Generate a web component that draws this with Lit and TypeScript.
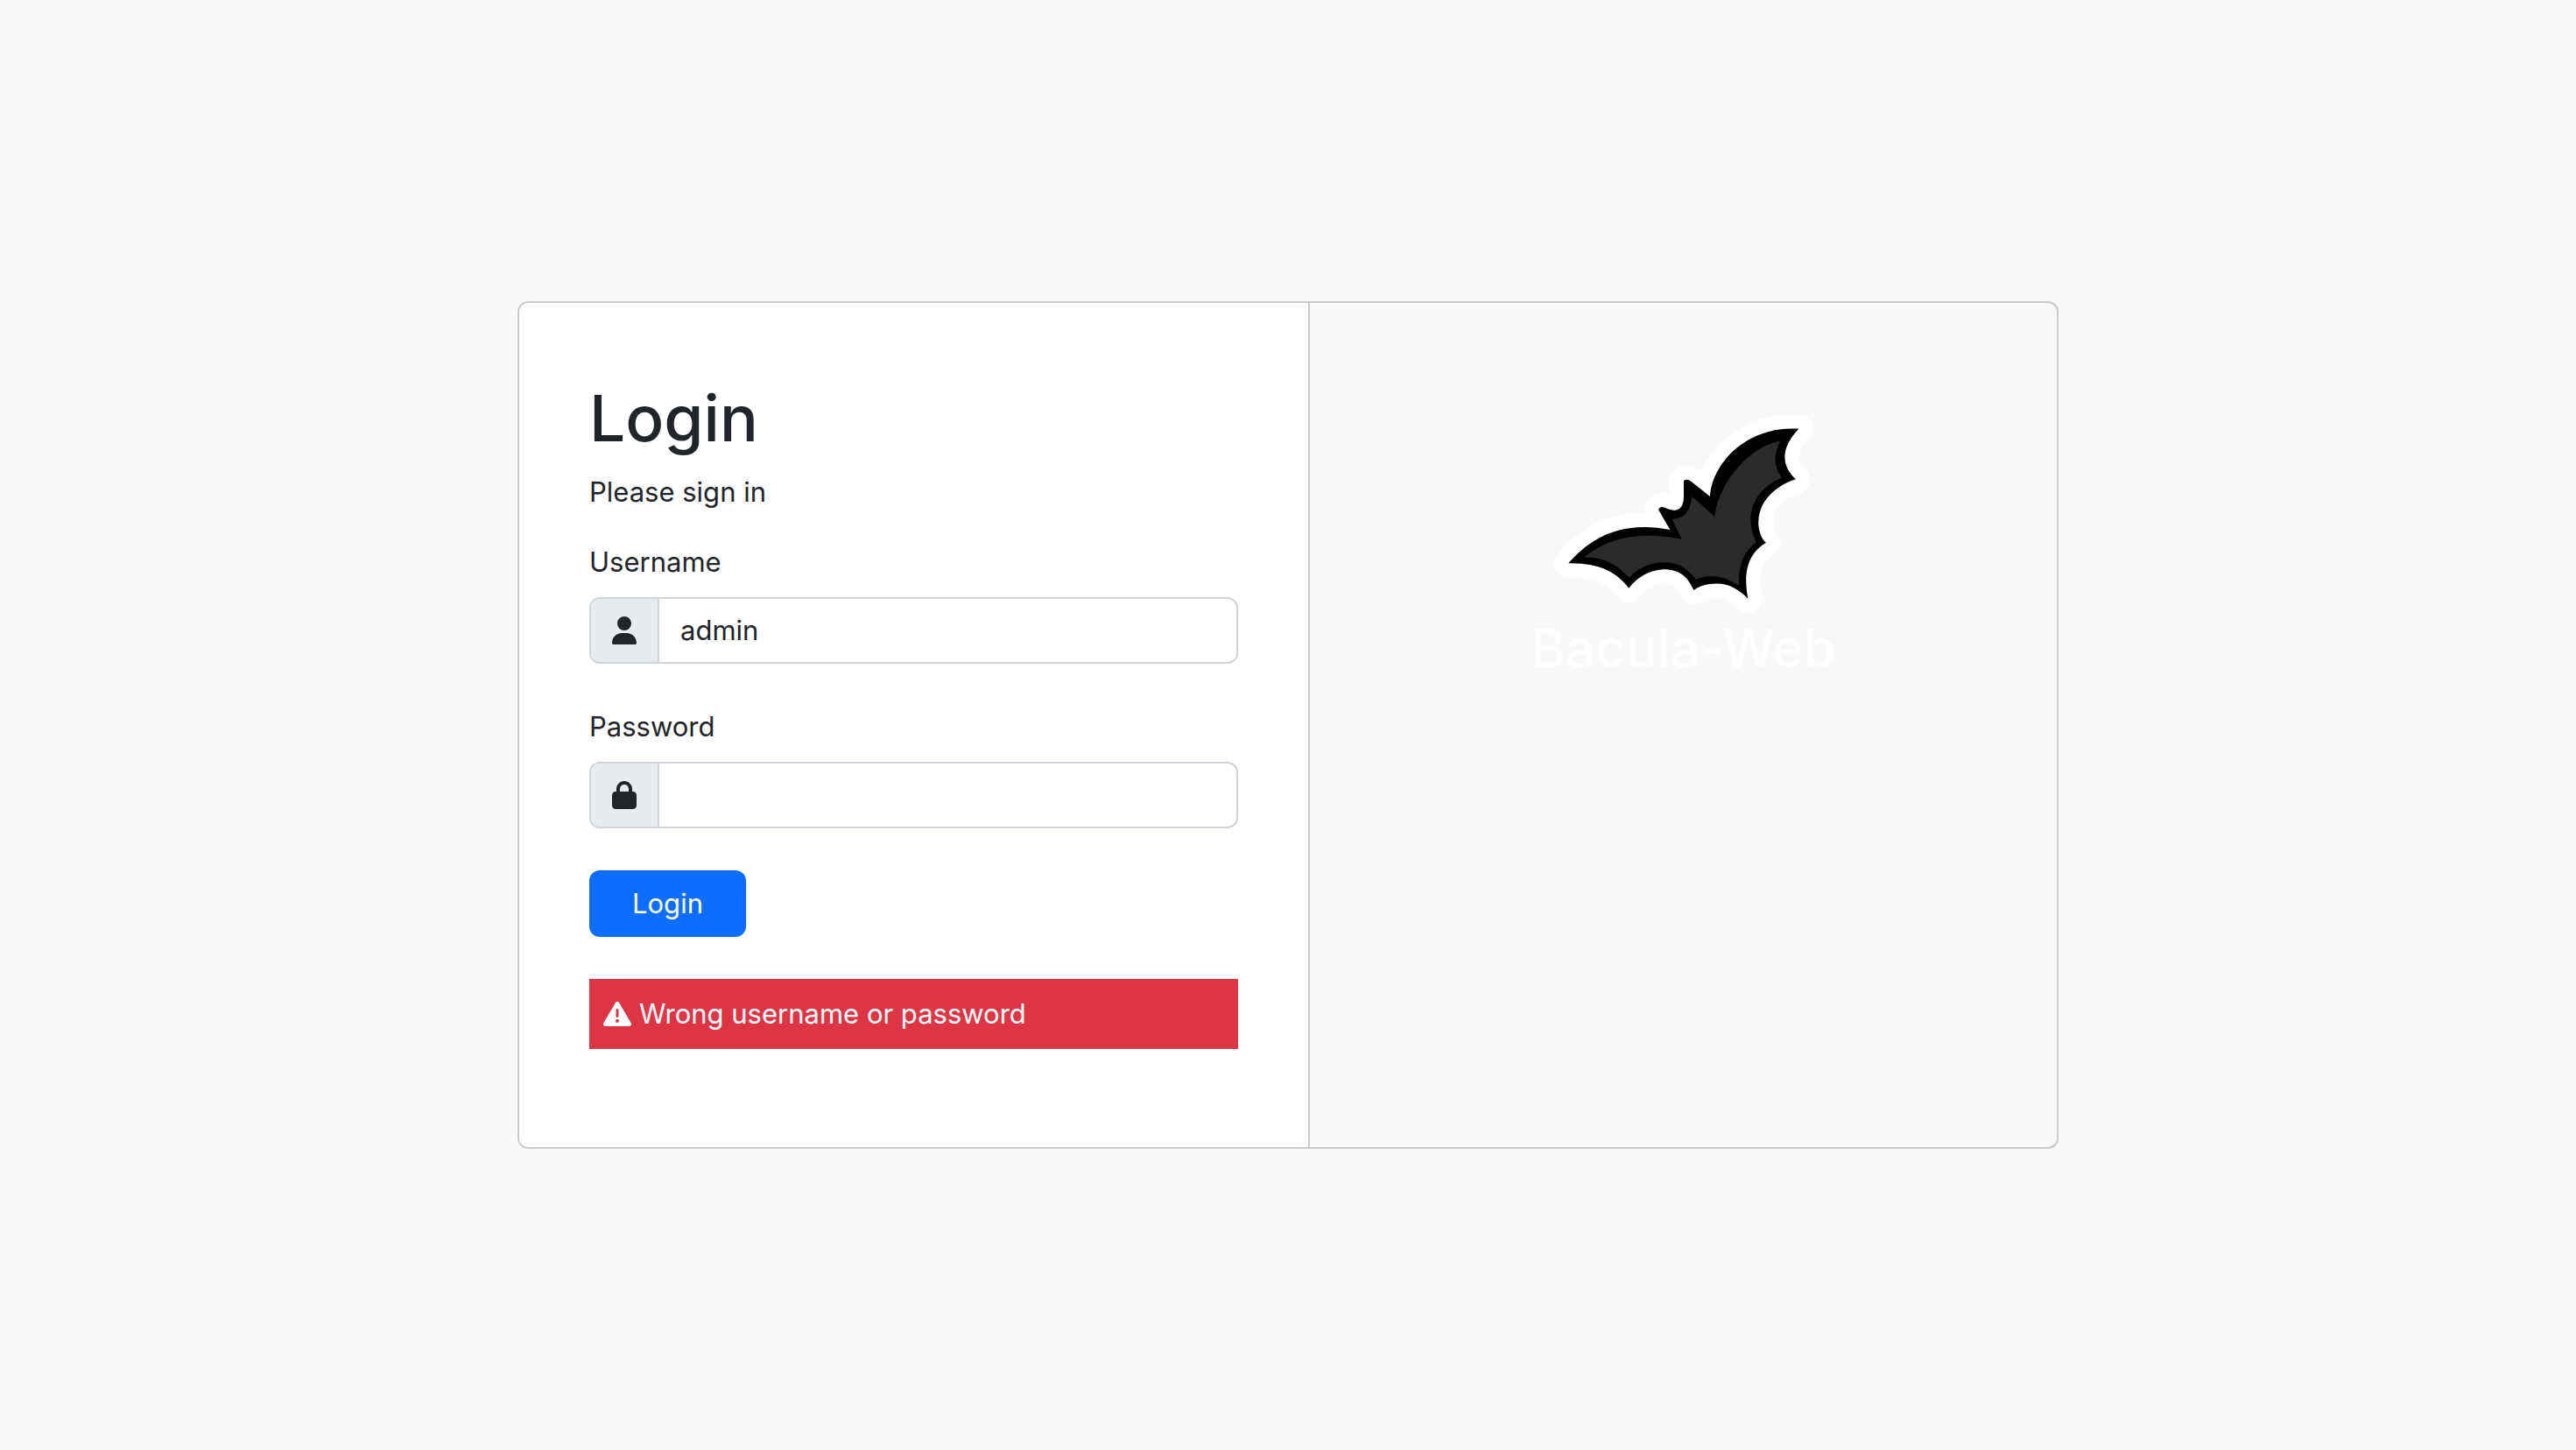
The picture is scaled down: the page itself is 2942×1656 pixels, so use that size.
import { LitElement, html, css, svg } from "lit";
import { customElement } from "lit/decorators.js";

const BAT_OUTLINE =
  "M155 551C220 475 325 400 503 436L463 367Q470 352 487 361C522 377 549 372 550 322L550 268Q560 260 575 270L640 322C645 215 760 78 944 90C882 155 882 215 934 263C850 290 802 350 806 420C809 448 818 468 832 480C780 512 750 565 770 672C735 638 700 614 640 622C615 625 600 632 584 643C560 590 530 572 480 572C430 575 390 600 362 636C320 585 270 550 155 551Z";
const BAT_BODY =
  "M207 531C270 480 370 433 543 468L510 399C548 398 574 378 577 321L656 391C665 290 765 152 880 132C855 185 860 225 886 258C800 292 750 380 798 478C752 515 735 565 740 628C690 595 640 585 592 607C555 555 510 545 475 548C430 550 390 570 363 600C320 555 270 525 207 531Z";

const userIcon = html`<svg class="icon" viewBox="0 0 448 512" aria-hidden="true">${svg`<path d="M224 256A128 128 0 1 0 224 0a128 128 0 1 0 0 256zm-45.7 48C79.8 304 0 383.8 0 482.3C0 498.7 13.3 512 29.7 512l388.6 0c16.4 0 29.7-13.3 29.7-29.7C448 383.8 368.2 304 269.7 304l-91.4 0z"/>`}</svg>`;

const lockIcon = html`<svg class="icon" viewBox="0 0 448 512" aria-hidden="true">${svg`<path d="M144 144l0 48 160 0 0-48c0-44.2-35.8-80-80-80s-80 35.8-80 80zM80 192l0-48C80 64.5 144.5 0 224 0s144 64.5 144 144l0 48 16 0c35.3 0 64 28.7 64 64l0 192c0 35.3-28.7 64-64 64L64 512c-35.3 0-64-28.7-64-64L0 256c0-35.3 28.7-64 64-64l16 0z"/>`}</svg>`;

const warningIcon = html`<svg class="icon icon-wide" viewBox="0 0 512 512" aria-hidden="true">${svg`<path d="M256 32c14.2 0 27.3 7.5 34.5 19.8l216 368c7.3 12.4 7.3 27.7 .2 40.1S486.3 480 472 480L40 480c-14.3 0-27.6-7.7-34.7-20.1s-7-27.8 .2-40.1l216-368C228.7 39.5 241.8 32 256 32zm0 128c-13.3 0-24 10.7-24 24l0 112c0 13.3 10.7 24 24 24s24-10.7 24-24l0-112c0-13.3-10.7-24-24-24zm32 224a32 32 0 1 0 -64 0 32 32 0 1 0 64 0z"/>`}</svg>`;

@customElement("app-root")
export class AppRoot extends LitElement {
  static styles = css`
    :host {
      display: flex;
      align-items: center;
      justify-content: center;
      min-height: 100vh;
      box-sizing: border-box;
      background: #f8f9fa;
      color: #212529;
      font-family: Inter, "Liberation Sans", sans-serif;
      font-size: 31px;
      line-height: 48px;
    }
    *,
    *::before,
    *::after {
      box-sizing: border-box;
    }
    .cards {
      display: flex;
      width: 100%;
      max-width: 1760px;
      border-radius: 12px;
    }
    .card {
      flex: 1 1 0;
      min-width: 0;
      border: 2px solid #cbcccd;
    }
    .form-card {
      padding: 80px;
      background: #fff;
      border-radius: 12px 0 0 12px;
    }
    .brand-card {
      display: flex;
      flex-direction: column;
      align-items: center;
      padding: 127px 56px 80px;
      border-left: 0;
      border-radius: 0 12px 12px 0;
    }
    .title {
      margin: 0 0 8px;
      font-size: 73px;
      font-weight: 500;
      line-height: 104px;
    }
    .lead {
      margin: 0 0 32px;
    }
    .label {
      display: block;
      margin-bottom: 16px;
    }
    .group {
      display: flex;
      height: 76px;
      margin-bottom: 48px;
      border: 2px solid #ced4da;
      border-radius: 12px;
      overflow: hidden;
      background: #fff;
    }
    .addon {
      display: flex;
      align-items: center;
      padding: 0 24px;
      background: #e9ecef;
      border-right: 2px solid #ced4da;
    }
    .icon {
      display: block;
      flex: none;
      width: 28px;
      height: 32px;
      fill: currentColor;
    }
    .icon-wide {
      width: 32px;
    }
    .input {
      flex: 1;
      min-width: 0;
      padding: 0 24px;
      border: 0;
      outline: 0;
      background: transparent;
      color: inherit;
      font: inherit;
    }
    .submit {
      display: block;
      height: 76px;
      margin-bottom: 48px;
      padding: 0 49px;
      border: 0;
      border-radius: 12px;
      background: #0d6efd;
      color: #fff;
      font: inherit;
      cursor: pointer;
    }
    .alert {
      display: flex;
      align-items: center;
      gap: 9px;
      margin: 0 0 32px;
      padding: 16px;
      background: #dc3545;
      color: #fff;
    }
    .bat {
      display: block;
      width: 300px;
      height: 227px;
    }
    .halo {
      fill: #fff;
      stroke: #fff;
      stroke-width: 98;
      stroke-linejoin: round;
    }
    .outline {
      fill: #000;
    }
    .body {
      fill: #2b2b2b;
    }
    .brand {
      margin: 0;
      color: #fff;
      font-size: 60px;
      font-weight: 500;
      line-height: 80px;
    }
  `;

  render() {
    return html`
      <main class="cards">
        <form class="card form-card" @submit=${(e: Event) => e.preventDefault()}>
          <h1 class="title">Login</h1>
          <p class="lead">Please sign in</p>
          <label class="label" for="username">Username</label>
          <div class="group">
            <span class="addon">${userIcon}</span>
            <input class="input" id="username" name="username" type="text" value="admin" />
          </div>
          <label class="label" for="password">Password</label>
          <div class="group">
            <span class="addon">${lockIcon}</span>
            <input class="input" id="password" name="password" type="password" />
          </div>
          <button class="submit" type="submit">Login</button>
          <p class="alert" role="alert">${warningIcon}<span>Wrong username or password</span></p>
        </form>
        <section class="card brand-card">
          <svg class="bat" viewBox="100 40 900 681" aria-hidden="true">
            <path class="halo" d=${BAT_OUTLINE} />
            <path class="outline" d=${BAT_OUTLINE} />
            <path class="body" d=${BAT_BODY} />
          </svg>
          <h2 class="brand">Bacula-Web</h2>
        </section>
      </main>
    `;
  }
}
